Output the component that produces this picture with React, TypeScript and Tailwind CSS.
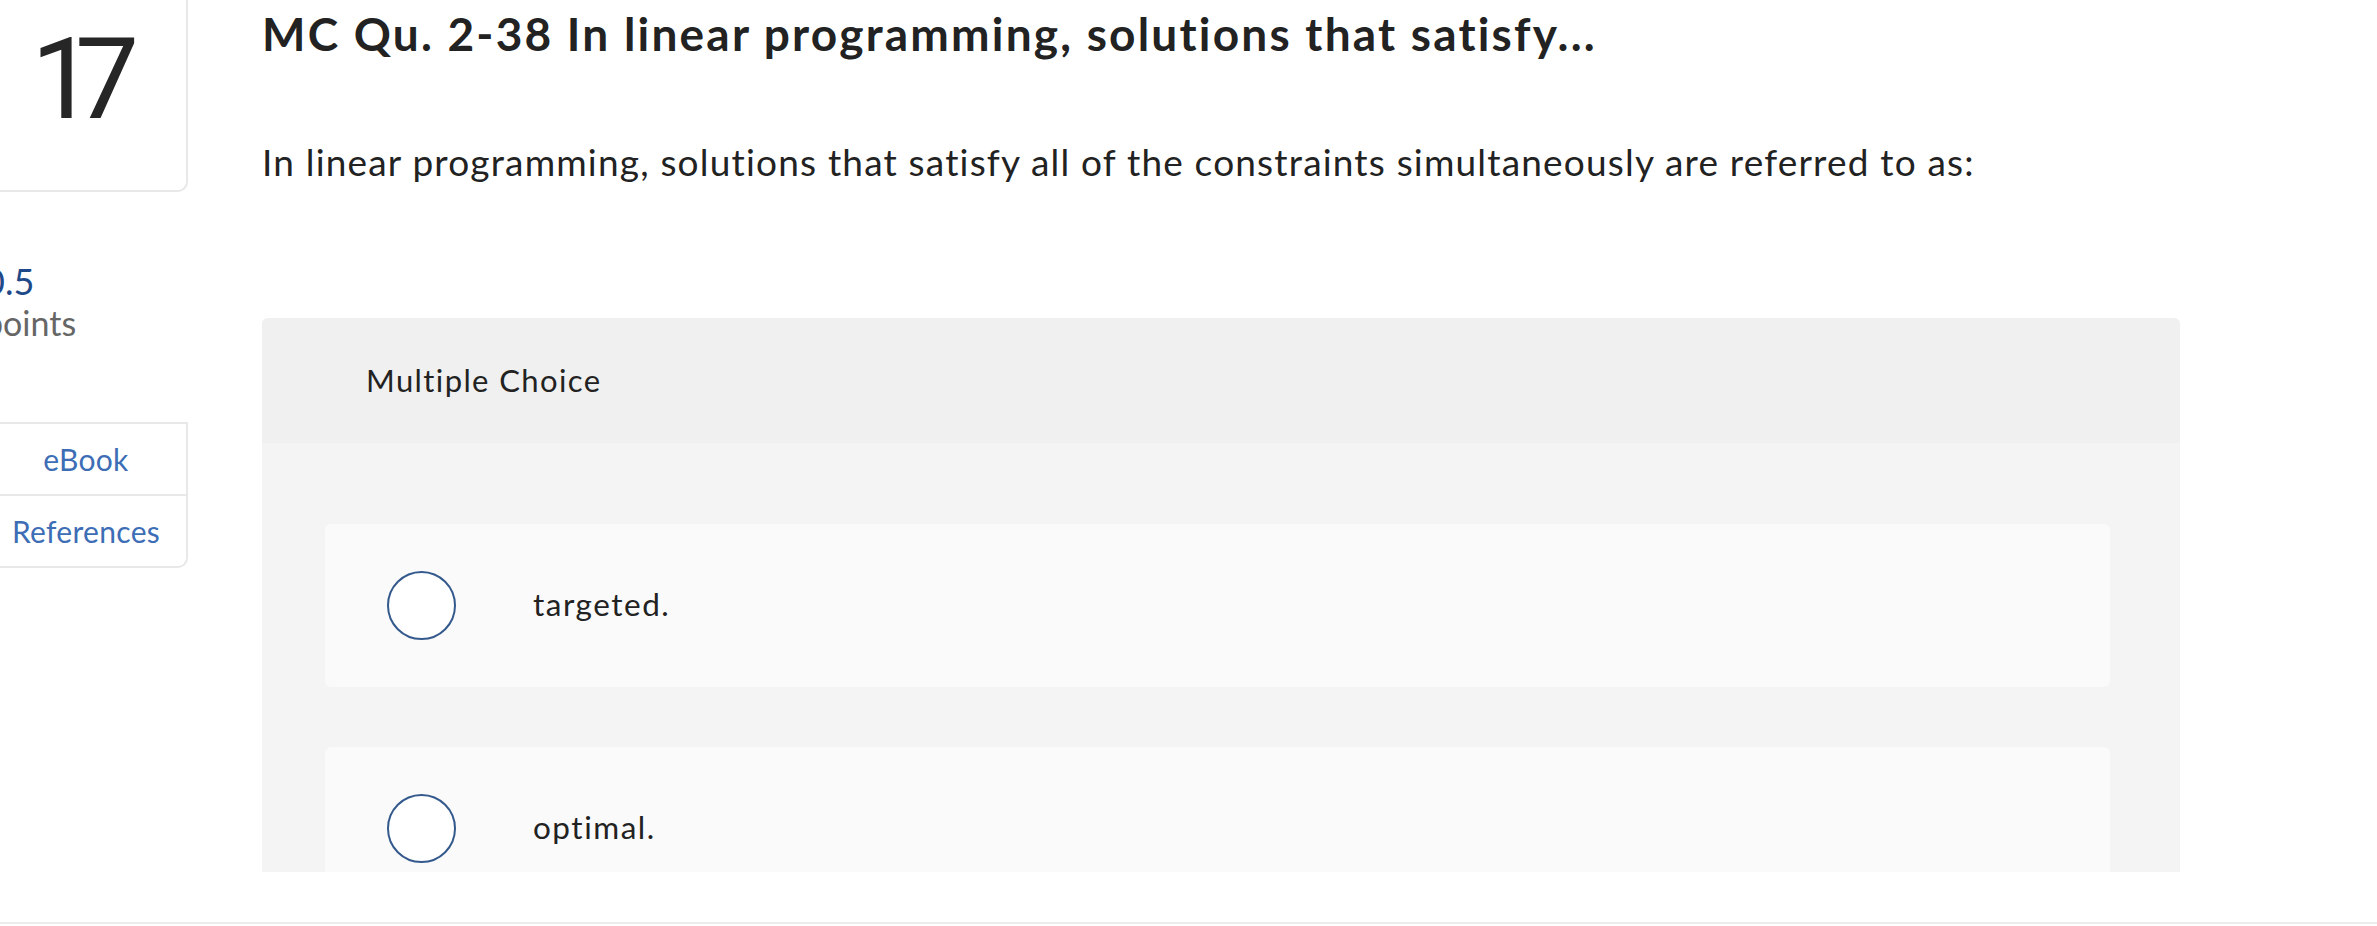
import React from "react";

function Radio() {
  return (
    <span className="block w-[69px] h-[69px] shrink-0 rounded-full border-2 border-[#34598c] bg-white" />
  );
}

function Option({ label }: { label: string }) {
  return (
    <div className="h-[163px] shrink-0 rounded-[6px] bg-[#fafafa] flex items-center pl-[62px]">
      <Radio />
      <span className="ml-[77px] text-[31.5px] leading-[1.2] tracking-[0.048em] text-[#222222]">{label}</span>
    </div>
  );
}

export default function App() {
  return (
    <div className="w-[2377px] h-[926px] overflow-hidden bg-white font-['Lato',sans-serif] [font-variant-ligatures:none]">
      <div className="h-[872px] overflow-hidden flex">
        {/* left column */}
        <div className="w-[202px] -ml-[14px] shrink-0 flex flex-col">
          <div className="h-[192px] border-r-2 border-b-2 border-[#e8e8e8] rounded-br-[10px] flex justify-center pt-[22px] pr-[22px]">
            <span className="font-['Roboto',sans-serif] text-[114px] leading-none tracking-[-20px] text-[#262626]">17</span>
          </div>
          <div className="-ml-[2px] mt-[68px] flex flex-col">
            <span className="text-[36px] leading-[42px] text-[#1f4a8a]">0.5</span>
            <span className="text-[34px] leading-[42px] text-[#666666]">points</span>
          </div>
          <div className="mt-[78px] border-t-2 border-r-2 border-b-2 border-[#e8e8e8] rounded-br-[10px] flex flex-col">
            <div className="h-[72px] flex items-center justify-center border-b-2 border-[#e8e8e8]">
              <span className="text-[30px] leading-none tracking-[0.01em] text-[#3d6db5]">eBook</span>
            </div>
            <div className="h-[70px] flex items-center justify-center">
              <span className="text-[30px] leading-none tracking-[0.01em] text-[#3d6db5]">References</span>
            </div>
          </div>
        </div>

        {/* right column */}
        <div className="ml-[74px] w-[1918px] shrink-0 flex flex-col">
          <h1 className="pt-[5.6px] text-[46px] leading-[1.2] font-bold tracking-[0.048em] whitespace-nowrap text-[#222222]">
            MC Qu. 2-38 In linear programming, solutions that satisfy...
          </h1>
          <p className="mt-[79px] text-[37px] leading-[1.2] tracking-[0.032em] whitespace-nowrap text-[#222222]">
            In linear programming, solutions that satisfy all of the constraints simultaneously are referred to as:
          </p>
          <div className="mt-[133.6px] rounded-t-[6px] overflow-hidden flex flex-col bg-[#f4f4f4] grow">
            <div className="h-[125px] shrink-0 bg-[#f0f0f0] flex items-center pl-[104px]">
              <span className="text-[31px] leading-[1.2] tracking-[0.045em] text-[#222222]">Multiple Choice</span>
            </div>
            <div className="pt-[81px] pl-[63px] pr-[70px] flex flex-col gap-[60px]">
              <Option label="targeted." />
              <Option label="optimal." />
              <Option label="feasible." />
            </div>
          </div>
        </div>
      </div>
      <div className="h-[50px]" />
      <div className="h-[2px] bg-[#ececec]" />
    </div>
  );
}
